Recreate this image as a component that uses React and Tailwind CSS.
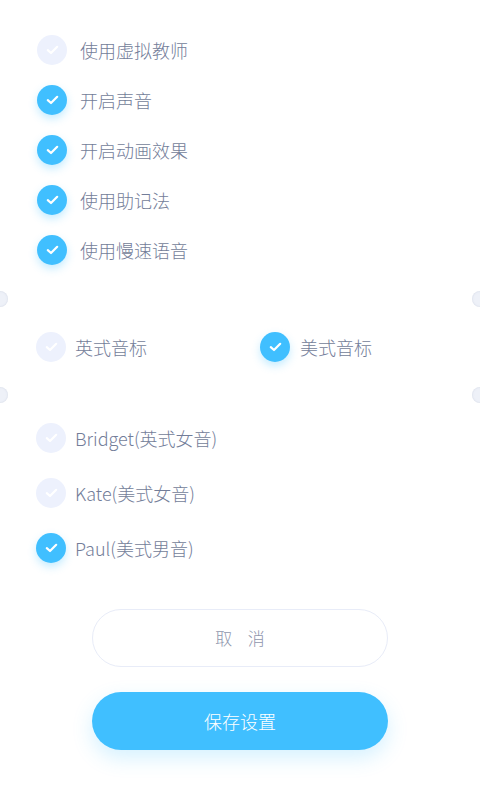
import { useState } from 'react';

const font = { fontFamily: '"Noto Sans CJK SC", "Noto Sans", sans-serif' };

function CheckCircle({ checked }) {
  return (
    <span
      className={
        'flex items-center justify-center w-[30px] h-[30px] rounded-full shrink-0 ' +
        (checked ? 'bg-[#40bfff] shadow-[0_4px_8px_rgba(64,191,255,0.3)]' : 'bg-[#edf1fd]')
      }
    >
      <svg width="13" height="10" viewBox="0 0 13 10" fill="none">
        <polyline points="1.8,5.2 5,8 11.2,1.8" stroke="white" strokeWidth="2.2" strokeLinecap="round" strokeLinejoin="round" />
      </svg>
    </span>
  );
}

function Option({ label, checked, onClick, gap = 'gap-[13px]', h = 'h-[50px]' }) {
  return (
    <button onClick={onClick} className={`flex items-center ${gap} ${h} text-left`}>
      <CheckCircle checked={checked} />
      <span className="text-[18px] font-light text-[#737d99] leading-none">{label}</span>
    </button>
  );
}

function Notch({ side }) {
  return (
    <span
      className={
        'absolute top-[-8px] w-[16px] h-[16px] rounded-full bg-[#eef1f8] shadow-[inset_0_0_2px_rgba(150,160,190,0.35)] ' +
        (side === 'left' ? 'left-[-8px]' : 'right-[-8px]')
      }
    />
  );
}

export default function App() {
  const [opts, setOpts] = useState({
    teacher: false,
    sound: true,
    anim: true,
    mnemonic: true,
    slow: true,
  });
  const [phonetic, setPhonetic] = useState('us');
  const [voice, setVoice] = useState('paul');

  const general = [
    ['teacher', '使用虚拟教师'],
    ['sound', '开启声音'],
    ['anim', '开启动画效果'],
    ['mnemonic', '使用助记法'],
    ['slow', '使用慢速语音'],
  ];

  const voices = [
    ['bridget', 'Bridget(英式女音)'],
    ['kate', 'Kate(美式女音)'],
    ['paul', 'Paul(美式男音)'],
  ];

  return (
    <div className="w-[480px] min-h-[800px] bg-white overflow-hidden" style={font}>
      <div className="flex flex-col pt-[25px] pb-[24px] pl-[37px]">
        {general.map(([key, label]) => (
          <Option
            key={key}
            label={label}
            checked={opts[key]}
            onClick={() => setOpts({ ...opts, [key]: !opts[key] })}
          />
        ))}
      </div>

      <div className="relative h-[96px] flex items-center">
        <Notch side="left" />
        <Notch side="right" />
        <div className="flex w-full pl-[36px]">
          <div className="w-[224px]">
            <Option label="英式音标" checked={phonetic === 'uk'} onClick={() => setPhonetic('uk')} gap="gap-[9px]" />
          </div>
          <Option label="美式音标" checked={phonetic === 'us'} onClick={() => setPhonetic('us')} gap="gap-[10px]" />
        </div>
      </div>

      <div className="relative flex flex-col pt-[15px] pl-[36px]">
        <Notch side="left" />
        <Notch side="right" />
        {voices.map(([key, label]) => (
          <Option
            key={key}
            label={label}
            checked={voice === key}
            onClick={() => setVoice(key)}
            gap="gap-[9px]"
            h="h-[55px]"
          />
        ))}
      </div>

      <div className="flex flex-col items-center mt-[34px] gap-[25px]">
        <button className="w-[296px] h-[58px] rounded-full border border-[#e8ecf8] text-[17px] font-light text-[#8f96ad] tracking-[0.9em] pl-[0.9em]">
          取消
        </button>
        <button className="w-[296px] h-[58px] rounded-full bg-[#40bfff] text-[18px] font-light text-white shadow-[0_8px_20px_rgba(64,191,255,0.22)]">
          保存设置
        </button>
      </div>
    </div>
  );
}
